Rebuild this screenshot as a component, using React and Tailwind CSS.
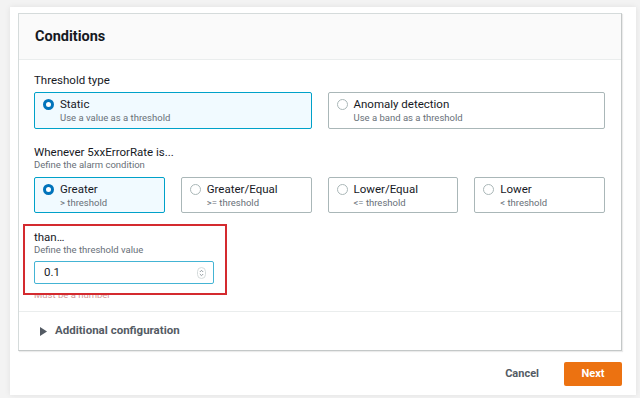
import React from "react";

const font = { fontFamily: 'Roboto, "Liberation Sans", Arial, sans-serif' };

const Radio = ({ checked }) =>
  checked ? (
    <span className="w-[11px] h-[11px] rounded-full border-[3.5px] border-[#0073bb] bg-white shrink-0" />
  ) : (
    <span className="w-[11px] h-[11px] rounded-full border border-[#aab7b8] bg-white shrink-0" />
  );

const Tile = ({ title, sub, checked, h }) => (
  <div
    className={`flex items-start rounded-[2px] border pl-[8px] ${h} ${
      checked ? "border-[#00a1c9] bg-[#f1faff]" : "border-[#aab7b8] bg-white"
    }`}
  >
    <div className="flex items-center h-[14px] mt-[4px]">
      <Radio checked={checked} />
    </div>
    <div className="ml-[6px] mt-[4px]">
      <div className="text-[11.5px] leading-[14px] text-[#16191f]">{title}</div>
      <div className="text-[9.5px] leading-[13px] text-[#687078]">{sub}</div>
    </div>
  </div>
);

export default function App() {
  const types = [
    { title: "Static", sub: "Use a value as a threshold", checked: true },
    { title: "Anomaly detection", sub: "Use a band as a threshold" },
  ];
  const conds = [
    { title: "Greater", sub: "> threshold", checked: true },
    { title: "Greater/Equal", sub: ">= threshold" },
    { title: "Lower/Equal", sub: "<= threshold" },
    { title: "Lower", sub: "< threshold" },
  ];

  return (
    <div className="w-[640px] h-[398px] bg-[#f3f3f3] pt-[7px] pl-[10px]" style={font}>
      <div className="w-[626px] h-[388px] bg-white shadow-[0_0_6px_rgba(0,0,0,0.08)] pt-[6px] pl-2">
        {/* Conditions card */}
        <div className="w-[604px] border border-[#d5dbdb] border-r-[#c4c8c8] border-b-[#c4c8c8] shadow-[1px_1px_1px_rgba(0,0,0,0.08)]">
          <div className="h-[46px] bg-[#fafafa] border-b border-[#eaeded] flex items-center pl-4">
            <h2 className="text-[14.5px] font-bold text-[#16191f]">Conditions</h2>
          </div>

          <div className="pl-[15px] pr-4">
            <div className="mt-[12px] text-[11.5px] leading-[16px] text-[#16191f]">Threshold type</div>
            <div className="grid grid-cols-2 gap-4 mt-[4px]">
              {types.map((t) => (
                <Tile key={t.title} {...t} h="h-[37px]" />
              ))}
            </div>

            <div className="mt-[16px] text-[11.5px] leading-[14px] text-[#16191f]">Whenever 5xxErrorRate is...</div>
            <div className="text-[9.5px] leading-[12px] text-[#687078]">Define the alarm condition</div>
            <div className="grid grid-cols-4 gap-4 mt-[6px]">
              {conds.map((c) => (
                <Tile key={c.title} {...c} h="h-[36px]" />
              ))}
            </div>

            {/* highlighted threshold field */}
            <div className="relative z-10 w-[204px] ml-[-11px] mt-[11px] border-2 border-[#d42a2f] bg-white pl-[9px] pt-[4px] pb-[9px]">
              <div className="text-[11.5px] leading-[14px] text-[#16191f]">than…</div>
              <div className="text-[9.5px] leading-[12px] text-[#687078]">Define the threshold value</div>
              <div className="mt-[5px] w-[180px] h-[23px] border border-[#44b4d4] rounded-[2px] flex items-center justify-between pl-[9px] pr-[7px]">
                <span className="text-[11.5px] text-[#16191f]">0.1</span>
                <svg width="9" height="12" viewBox="0 0 9 12">
                  <rect x="0.5" y="0.5" width="8" height="11" rx="4" fill="none" stroke="#d5dbdb" />
                  <path d="M2.8 5 L4.5 3.3 L6.2 5 M2.8 7 L4.5 8.7 L6.2 7" fill="none" stroke="#879196" strokeWidth="0.9" />
                </svg>
              </div>
            </div>
            <div className="relative mt-[-6px] text-[9.5px] leading-[12px] text-[#d29a9a]">Must be a number</div>
          </div>

          <div className="mt-[10px] border-t border-[#eaeded] h-[39px] flex items-center pl-[21px]">
            <svg width="7" height="9" viewBox="0 0 7 9">
              <path d="M0 0 L7 4.5 L0 9 Z" fill="#545b64" />
            </svg>
            <span className="ml-[8px] text-[11.5px] font-bold text-[#545b64]">Additional configuration</span>
          </div>
        </div>

        <div className="w-[604px] flex justify-end items-center mt-[11px]">
          <button className="text-[11px] font-bold text-[#545b64] mr-[25px]">Cancel</button>
          <button className="w-[58px] h-[24px] bg-[#ec7211] rounded-[2px] text-[11px] font-bold text-white">Next</button>
        </div>
      </div>
    </div>
  );
}
